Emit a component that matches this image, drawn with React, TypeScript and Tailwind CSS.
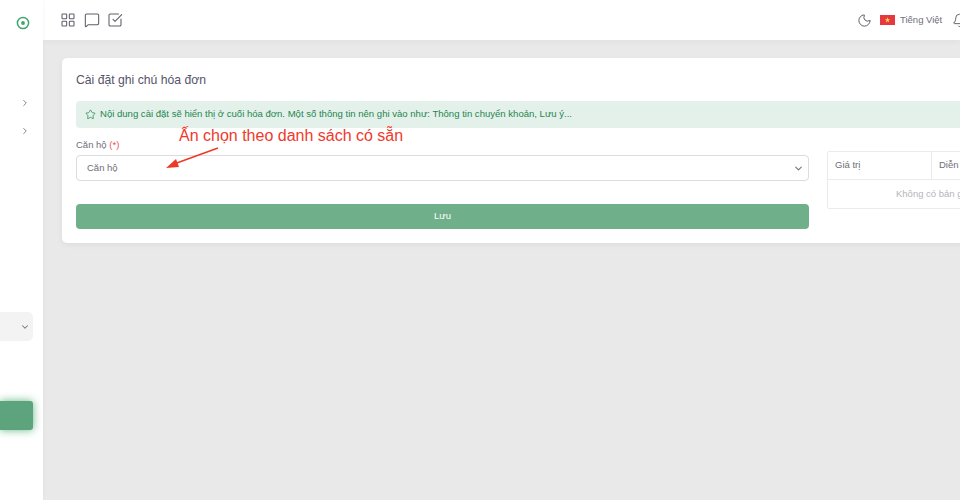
import React from "react";
import { LayoutGrid, MessageSquare, SquareCheckBig, Moon, Bell, ChevronRight, ChevronDown, Star } from "lucide-react";

const font = { fontFamily: '"Liberation Sans", Arial, sans-serif' };

export default function App() {
  return (
    <div className="relative flex h-[500px] w-[960px] overflow-hidden bg-[#e9e9e9] font-['Liberation_Sans',sans-serif]">
      {/* Sidebar */}
      <aside className="relative z-10 flex h-full w-[43px] shrink-0 flex-col items-end bg-white shadow-[0_0_4px_rgba(0,0,0,0.05)]">
        <div className="flex h-[46px] w-full items-center justify-center pl-[3px]">
          <svg width="14" height="14" viewBox="0 0 14 14" fill="none">
            <circle cx="7" cy="7" r="5.6" stroke="#3fa56f" strokeWidth="1.5" />
            <circle cx="7" cy="7" r="1.9" fill="#3fa56f" />
          </svg>
        </div>
        <div className="mt-[52px] flex w-full flex-col items-center gap-[18px] pl-[6px] text-[#77777f]">
          <ChevronRight size={10} strokeWidth={2.2} />
          <ChevronRight size={10} strokeWidth={2.2} />
        </div>
        <div className="mt-[176px] flex h-[29px] w-[33px] items-center justify-end self-start rounded-r-[5px] bg-[#f3f3f3] pr-[3px] text-[#77777f]">
          <ChevronDown size={10} strokeWidth={2.5} />
        </div>
        <div className="mt-[60px] h-[29px] w-[33px] self-start rounded-r-[3px] bg-[#5da37c] shadow-[0_0_8px_rgba(70,170,110,0.85)]" />
      </aside>

      {/* Main */}
      <main className="flex min-w-0 flex-1 flex-col">
        <header className="flex h-[40px] shrink-0 items-center bg-white pl-[17px] text-[#5f5e6a] shadow-[0_2px_6px_rgba(0,0,0,0.04)]">
          <div className="flex items-center gap-[7.5px]">
            <LayoutGrid size={16} strokeWidth={1.6} />
            <MessageSquare size={16} strokeWidth={1.6} />
            <SquareCheckBig size={16} strokeWidth={1.6} />
          </div>
          <div className="ml-[734px] flex shrink-0 items-center">
            <Moon size={15} strokeWidth={1.6} />
            <svg className="ml-[8px]" width="15" height="10" viewBox="0 0 15 10">
              <rect width="15" height="10" fill="#e8383f" />
              <polygon points="7.5,2.2 8.2,4.2 10.2,4.2 8.6,5.4 9.2,7.4 7.5,6.2 5.8,7.4 6.4,5.4 4.8,4.2 6.8,4.2" fill="#f6d743" />
            </svg>
            <span className="ml-[5px] w-[42px] whitespace-nowrap text-[9.5px] text-[#6f6e7a]">Tiếng Việt</span>
            <div className="relative ml-[10px]">
              <Bell size={15} strokeWidth={1.5} />
              <span className="absolute right-0 top-[-2px] h-[5px] w-[5px] rounded-full bg-[#e8484f]" />
            </div>
          </div>
        </header>

        <div className="pl-[19px] pt-[18px]">
          <section className="relative h-[185px] w-[960px] rounded-[5px] bg-white px-[14px] pt-[14px] shadow-[0_2px_6px_rgba(0,0,0,0.05)]">
            <h1 className="text-[12.2px] leading-[16px] text-[#55536a]">Cài đặt ghi chú hóa đơn</h1>
            <div className="mt-[13px] flex h-[27px] w-[1000px] items-center gap-[4px] rounded-[4px] bg-[#e4f1ea] pl-[9px] text-[9.55px] text-[#1f8550]">
              <Star size={11} strokeWidth={1.6} />
              <span>Nội dung cài đặt sẽ hiển thị ở cuối hóa đơn. Một số thông tin nên ghi vào như: Thông tin chuyển khoản, Lưu ý...</span>
            </div>
            <div className="mt-[8px] flex gap-[18px]">
              <div className="w-[733px] shrink-0">
                <label className="block text-[9.5px] leading-[18px] text-[#6f6e7a]">
                  Căn hộ <span className="text-[#ea5455]">(*)</span>
                </label>
                <div className="mt-[1px] flex h-[26px] items-center justify-between rounded-[4px] border border-[#dcdce0] pl-[10px] pr-[4px] text-[9.5px] text-[#6f6e7a]">
                  <span>Căn hộ</span>
                  <ChevronDown size={11} strokeWidth={2.2} className="text-[#6f6e7a]" />
                </div>
                <button className="mt-[23px] flex h-[25px] w-full items-center justify-center rounded-[4px] bg-[#6fb08a] text-[9.5px] text-white">
                  Lưu
                </button>
              </div>
              <div className="mt-[15px] h-[58px] w-[300px] shrink-0 rounded-[2px] border border-[#ebebee] text-[9.5px]">
                <div className="flex h-[28px] items-center border-b border-[#ebebee] text-[#6f6e7a]">
                  <div className="flex h-full w-[104px] items-center border-r border-[#ebebee] pl-[7px]">Giá trị</div>
                  <div className="pl-[7px]">Diễn giải</div>
                </div>
                <div className="flex h-[28px] items-center pl-[68px] text-[#b4b4bb]">Không có bản ghi</div>
              </div>
            </div>
          </section>
        </div>
      </main>

      {/* Annotation */}
      <span style={font} className="absolute left-[179px] top-[126px] z-20 whitespace-nowrap text-[16px] leading-[20px] text-[#f0392b]">
        Ấn chọn theo danh sách có sẵn
      </span>
      <svg className="absolute left-[164px] top-[144px] z-20" width="58" height="28" viewBox="0 0 58 28" fill="none">
        <line x1="54" y1="4" x2="10" y2="20" stroke="#ee3a24" strokeWidth="1.6" />
        <polygon points="2,24 12,15 15,23" fill="#ee3a24" />
      </svg>
    </div>
  );
}
